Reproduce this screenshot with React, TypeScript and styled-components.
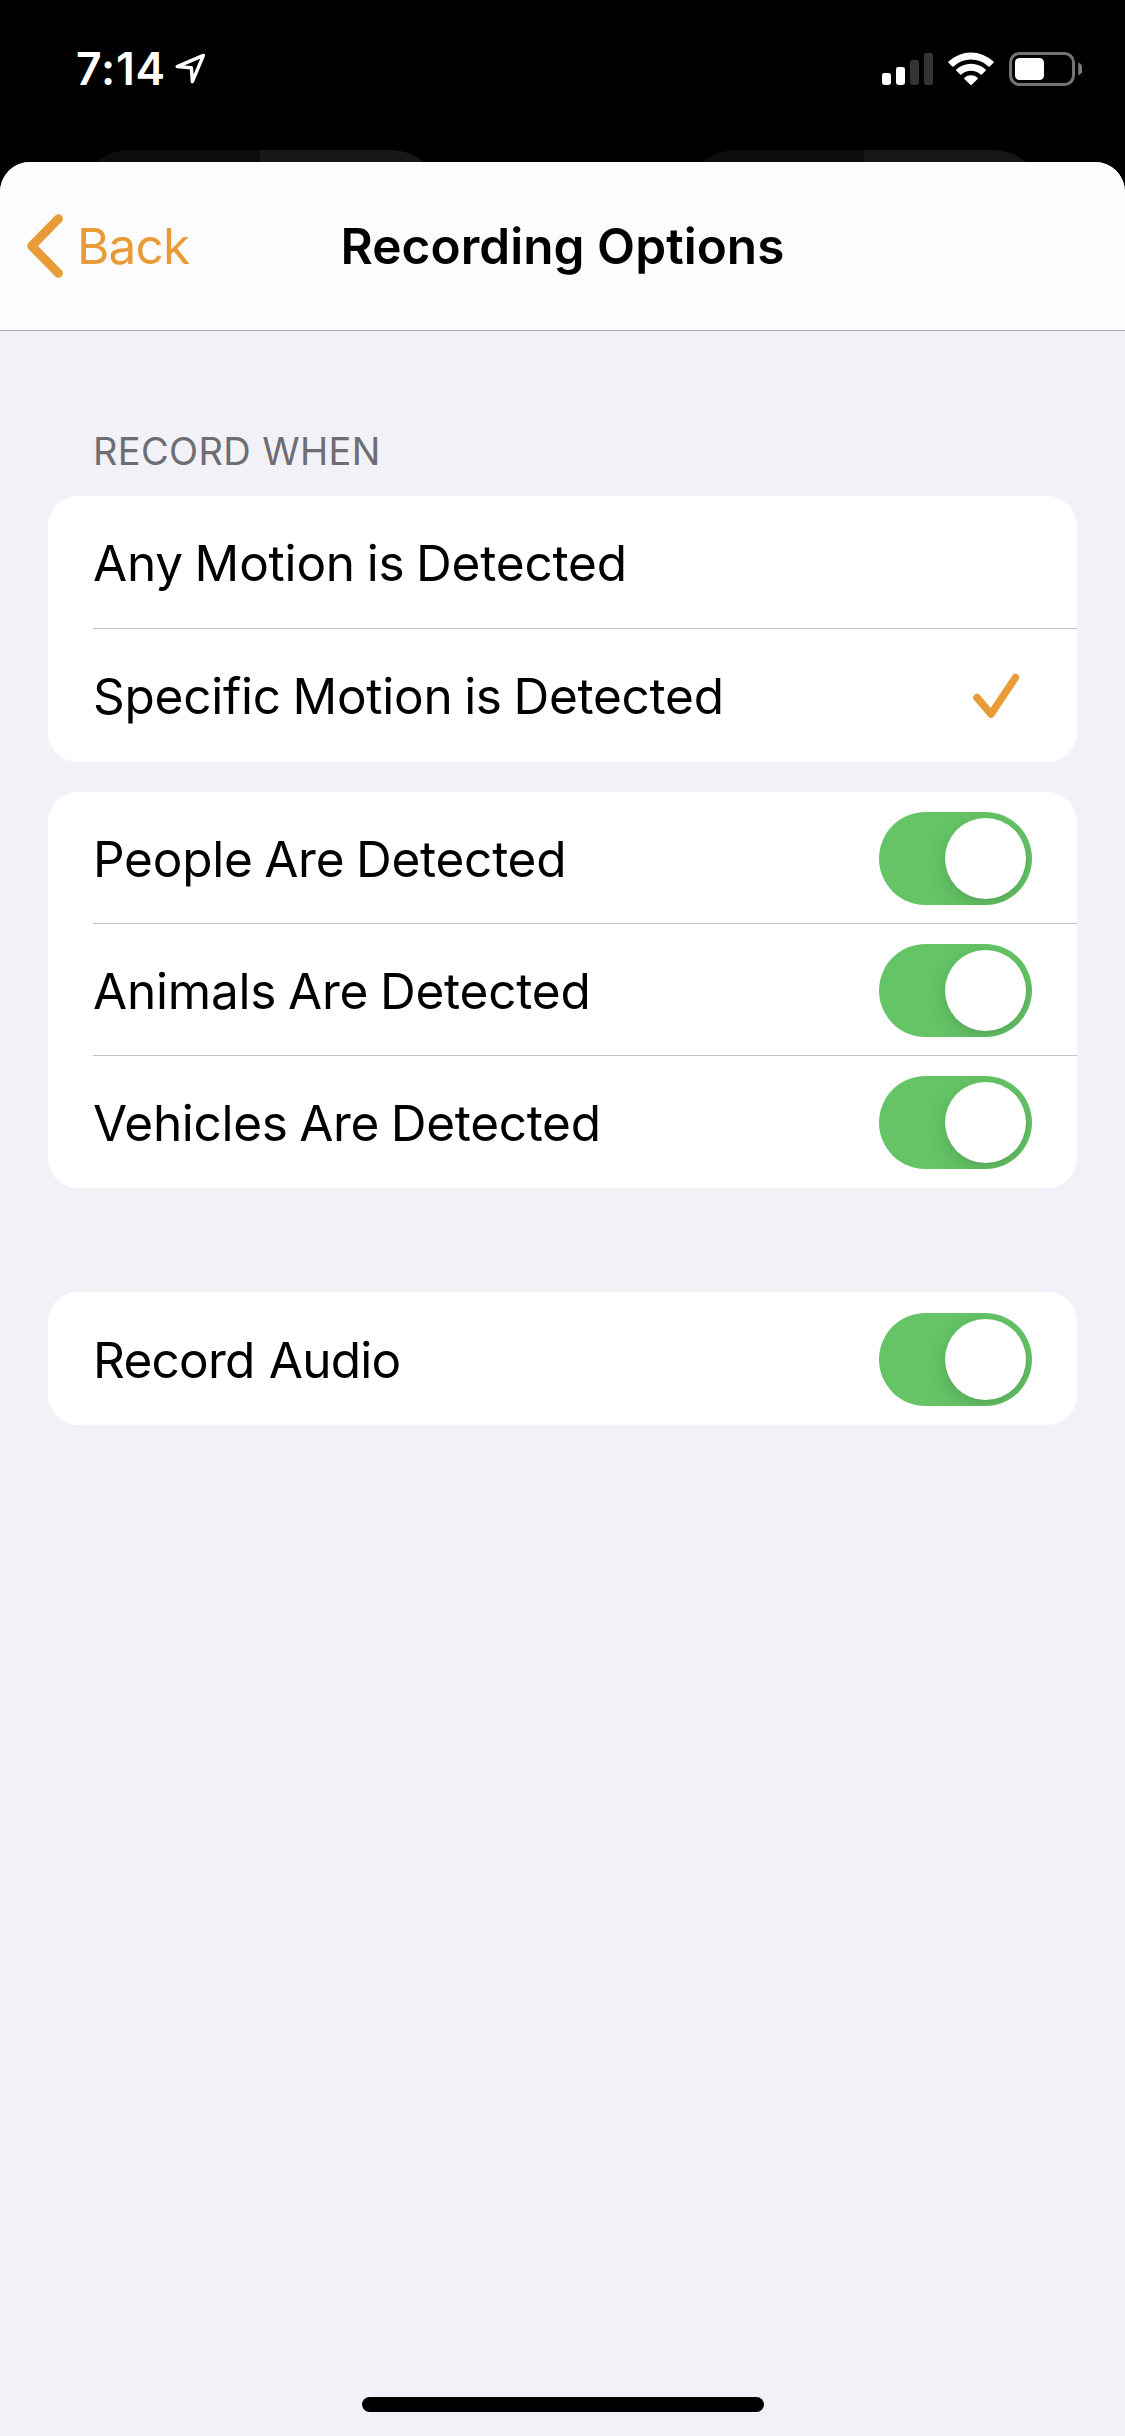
import React, { useState } from "react";
import styled, { createGlobalStyle } from "styled-components";

const ORANGE = "#e89c38";

const GlobalStyle = createGlobalStyle`
  *, *::before, *::after { box-sizing: border-box; }
  body {
    margin: 0;
    background: #000;
    font-family: Inter, "Liberation Sans", sans-serif;
    color: #000;
  }
  button { font: inherit; border: 0; background: none; padding: 0; margin: 0; color: inherit; }
`;

const Screen = styled.div`
  width: 1125px;
  height: 2436px;
  display: flex;
  flex-direction: column;
  background: #000;
  overflow: hidden;
`;

const StatusBar = styled.header`
  height: 150px;
  display: flex;
  justify-content: space-between;
  align-items: flex-start;
  padding: 42px 43px 0 76px;
  color: #fff;
`;

const StatusGroup = styled.div<{ $gap: number }>`
  display: flex;
  align-items: center;
  gap: ${(p) => p.$gap}px;
  height: 54px;
`;

const Clock = styled.span`
  font-size: 44.5px;
  line-height: 54px;
  font-weight: 600;
  letter-spacing: 0.8px;
  white-space: nowrap;
`;

const Glyph = styled.svg`
  display: block;
  flex: none;
`;

const DimmedTabs = styled.div`
  height: 12px;
  display: flex;
  justify-content: space-between;
  padding: 0 79px 0 76px;
  overflow: hidden;
`;

const DimmedTab = styled.div<{ $split: number; $width: number }>`
  width: ${(p) => p.$width}px;
  height: 110px;
  border-radius: 54px;
  background: linear-gradient(90deg, #0c0e0c ${(p) => p.$split}px, #161815 ${(p) => p.$split}px);
`;

const Sheet = styled.main`
  flex: 1;
  display: flex;
  flex-direction: column;
  border-radius: 30px 30px 0 0;
  background: #f2f1f7;
  overflow: hidden;
`;

const NavBar = styled.nav`
  height: 169px;
  display: grid;
  grid-template-columns: 1fr auto 1fr;
  align-items: center;
  padding: 0 27px;
  background: #fcfcfe;
  border-bottom: 1px solid #a9a9ad;
`;

const BackButton = styled.button`
  display: flex;
  align-items: center;
  gap: 13px;
  color: ${ORANGE};
  font-size: 49.5px;
  line-height: 60px;
  letter-spacing: -0.8px;
`;

const Title = styled.h1`
  margin: 0;
  font-size: 49.5px;
  line-height: 60px;
  font-weight: 600;
  letter-spacing: 0.05px;
  white-space: nowrap;
`;

const Content = styled.div`
  flex: 1;
  display: flex;
  flex-direction: column;
  padding: 0 48px;
`;

const SectionLabel = styled.h2`
  margin: 97px 0 21px 45px;
  font-size: 38px;
  line-height: 47px;
  font-weight: 400;
  letter-spacing: 0.35px;
  color: #6d6d72;
`;

const Card = styled.section<{ $top?: number }>`
  margin-top: ${(p) => p.$top ?? 0}px;
  border-radius: 30px;
  background: #fff;
  overflow: hidden;
`;

const Row = styled.div<{ $height: number; $divided?: boolean }>`
  height: ${(p) => p.$height}px;
  margin-left: 45px;
  padding: 1px 45px 0 0;
  display: flex;
  align-items: center;
  justify-content: space-between;
  box-shadow: ${(p) => (p.$divided ? "inset 0 -1px 0 #c4c4c7" : "none")};
`;

const RowLabel = styled.span<{ $tracking: number; $wordGap?: number; $drop?: number }>`
  padding-top: ${(p) => p.$drop ?? 0}px;
  font-size: 49.5px;
  line-height: 60px;
  letter-spacing: ${(p) => p.$tracking}px;
  word-spacing: ${(p) => p.$wordGap ?? -2}px;
  white-space: nowrap;
`;

const CheckSlot = styled.span`
  padding-right: 12px;
`;

const Track = styled.button<{ $on: boolean }>`
  width: 153px;
  height: 93px;
  padding: 6px;
  display: flex;
  justify-content: ${(p) => (p.$on ? "flex-end" : "flex-start")};
  border-radius: 47px;
  background: ${(p) => (p.$on ? "#65c466" : "#e9e9ea")};
  overflow: hidden;
`;

const Knob = styled.span`
  width: 81px;
  height: 81px;
  border-radius: 50%;
  background: #fff;
  box-shadow: 0 6px 22px rgba(0, 0, 0, 0.14), 0 2px 3px rgba(0, 0, 0, 0.04);
`;

const HomeArea = styled.footer`
  height: 39px;
  display: flex;
  justify-content: center;
  align-items: flex-start;
`;

const HomeIndicator = styled.div`
  width: 402px;
  height: 15px;
  border-radius: 8px;
  background: #000;
`;

const LocationArrow = () => (
  <Glyph width="32" height="32" viewBox="0 0 32 32">
    <path
      d="M2.2 13.6 28.4 2.4 17.4 28.6 16.4 14.8Z"
      fill="none"
      stroke="#fff"
      strokeWidth="3.4"
      strokeLinejoin="round"
    />
  </Glyph>
);

const Signal = () => (
  <Glyph width="51" height="34" viewBox="0 0 51 34">
    <rect x="0" y="21" width="9" height="12" rx="2.4" fill="#fff" />
    <rect x="14" y="15" width="9" height="18" rx="2.4" fill="#fff" />
    <rect x="28" y="8" width="9" height="25" rx="2.4" fill="#333" />
    <rect x="42" y="1" width="9" height="32" rx="2.4" fill="#333" />
  </Glyph>
);

const Wifi = () => (
  <Glyph width="46" height="34" viewBox="0 0 46 34">
    <path
      d="M.5 9.6A32.5 32.5 0 0 1 45.5 9.6Q46 10.1 45.5 10.7L41.7 14.4Q41.1 14.9 40.5 14.4A25.5 25.5 0 0 0 5.5 14.4Q4.9 14.9 4.3 14.4L.5 10.7Q0 10.1 .5 9.6Z"
      fill="#fff"
    />
    <path
      d="M8.3 17.6A21.5 21.5 0 0 1 37.7 17.6Q38.2 18.2 37.7 18.8L33.8 22.6Q33.2 23.1 32.6 22.6A14.2 14.2 0 0 0 13.4 22.6Q12.8 23.1 12.2 22.6L8.3 18.8Q7.8 18.2 8.3 17.6Z"
      fill="#fff"
    />
    <path d="M16.4 25.7A10 10 0 0 1 29.6 25.7Q30.2 26.3 29.6 26.9L23.7 32.7Q23 33.3 22.3 32.7L16.4 26.9Q15.8 26.3 16.4 25.7Z" fill="#fff" />
  </Glyph>
);

const Battery = () => (
  <Glyph width="73" height="34" viewBox="0 0 73 34">
    <rect x="1.5" y="1.5" width="63" height="31" rx="9" fill="none" stroke="#737373" strokeWidth="3" />
    <rect x="6" y="6" width="29" height="22" rx="4.5" fill="#fff" />
    <path d="M69.3 10.5A7 7 0 0 1 69.3 23.5Z" fill="#7b7b7b" />
  </Glyph>
);

const BackChevron = () => (
  <Glyph width="37" height="64" viewBox="0 0 37 64">
    <path
      d="M31.5 4.7 4.7 32 31.5 59.3"
      fill="none"
      stroke={ORANGE}
      strokeWidth="9"
      strokeLinecap="round"
      strokeLinejoin="round"
    />
  </Glyph>
);

const Checkmark = () => (
  <Glyph width="47" height="46" viewBox="0 0 47 46">
    <path
      d="M4 24.5 18 41.2 42.5 4.5"
      fill="none"
      stroke={ORANGE}
      strokeWidth="7.5"
      strokeLinecap="round"
      strokeLinejoin="round"
    />
  </Glyph>
);

const Toggle = ({ label }: { label: string }) => {
  const [on, setOn] = useState(true);
  return (
    <Track $on={on} role="switch" aria-checked={on} aria-label={label} onClick={() => setOn(!on)}>
      <Knob />
    </Track>
  );
};

const DETECTIONS = [
  { label: "People Are Detected", tracking: -0.25 },
  { label: "Animals Are Detected", tracking: -0.2 },
  { label: "Vehicles Are Detected", tracking: -0.3 },
];

export default function App() {
  return (
    <Screen>
      <GlobalStyle />
      <StatusBar>
        <StatusGroup $gap={9}>
          <Clock>7:14</Clock>
          <LocationArrow />
        </StatusGroup>
        <StatusGroup $gap={15}>
          <Signal />
          <Wifi />
          <Battery />
        </StatusGroup>
      </StatusBar>
      <DimmedTabs>
        <DimmedTab $width={368} $split={184} />
        <DimmedTab $width={363} $split={181} />
      </DimmedTabs>
      <Sheet>
        <NavBar>
          <BackButton>
            <BackChevron />
            Back
          </BackButton>
          <Title>Recording Options</Title>
        </NavBar>
        <Content>
          <SectionLabel>RECORD WHEN</SectionLabel>
          <Card>
            <Row $height={133} $divided>
              <RowLabel $tracking={-0.2}>Any Motion is Detected</RowLabel>
            </Row>
            <Row $height={133}>
              <RowLabel $tracking={-0.25}>Specific Motion is Detected</RowLabel>
              <CheckSlot>
                <Checkmark />
              </CheckSlot>
            </Row>
          </Card>
          <Card $top={30}>
            {DETECTIONS.map((item, i) => (
              <Row key={item.label} $height={132} $divided={i < DETECTIONS.length - 1}>
                <RowLabel $tracking={item.tracking} $drop={1}>
                  {item.label}
                </RowLabel>
                <Toggle label={item.label} />
              </Row>
            ))}
          </Card>
          <Card $top={104}>
            <Row $height={133}>
              <RowLabel $tracking={-0.75} $wordGap={1} $drop={1}>
                Record Audio
              </RowLabel>
              <Toggle label="Record Audio" />
            </Row>
          </Card>
        </Content>
        <HomeArea>
          <HomeIndicator />
        </HomeArea>
      </Sheet>
    </Screen>
  );
}
